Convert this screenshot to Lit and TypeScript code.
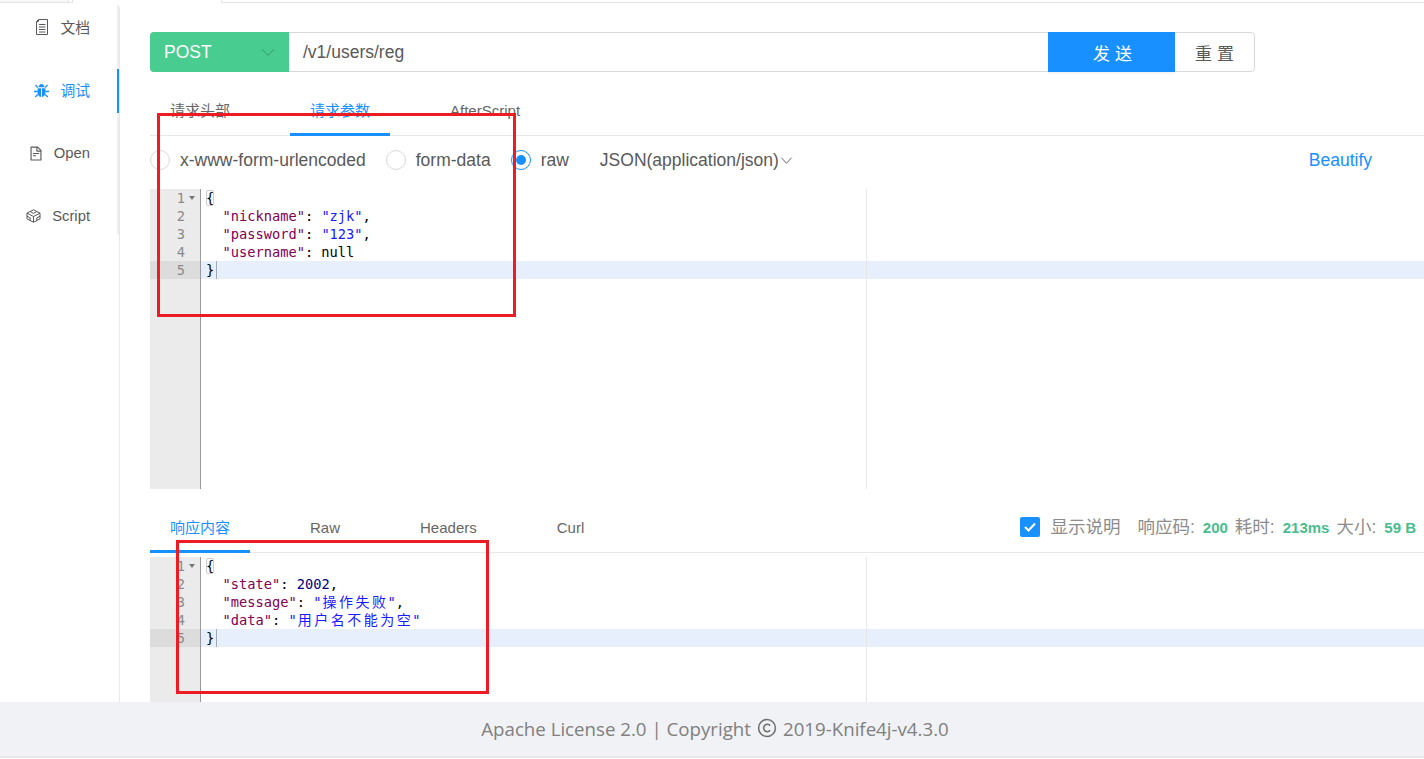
import { LitElement, html, css, svg } from "lit";
import { customElement } from "lit/decorators.js";

type Tok = [string, string];
const reqLines: Tok[][] = [
  [["br", "{"]],
  [["k", '  "nickname"'], ["p", ": "], ["s", '"zjk"'], ["p", ","]],
  [["k", '  "password"'], ["p", ": "], ["s", '"123"'], ["p", ","]],
  [["k", '  "username"'], ["p", ": null"]],
  [["p", "}"]],
];
const resLines: Tok[][] = [
  [["br", "{"]],
  [["k", '  "state"'], ["p", ": "], ["n", "2002"], ["p", ","]],
  [["k", '  "message"'], ["p", ": "], ["s", '"'], ["c", "操作失败"], ["s", '"'], ["p", ","]],
  [["k", '  "data"'], ["p", ": "], ["s", '"'], ["c", "用户名不能为空"], ["s", '"']],
  [["p", "}"]],
];

const chevron = svg`<path d="M1.5 3.5 L7 9.5 L12.5 3.5" fill="none" stroke="currentColor" stroke-width="1"/>`;

@customElement("app-root")
export class AppRoot extends LitElement {
  static styles = css`
    :host { display: block; width: 1424px; height: 759px; position: relative; overflow: hidden; background: #fff;
      font-family: "Liberation Sans", "Noto Sans CJK SC", sans-serif; color: #595959; }
    .top { height: 7px; display: flex; align-items: flex-start; }
    .strip { height: 3px; box-sizing: border-box; }
    .strip.a { width: 69px; background: #f7f7f7; border-bottom: 1px solid #e4e4e4; border-right: 1px solid #e4e4e4; }
    .strip.notch { width: 4px; border-bottom: 1px solid #e4e4e4; border-right: 1px solid #e4e4e4; }
    .strip.gap { width: 147px; }
    .strip.c { flex: 1; border-left: 1px solid #e4e4e4; border-bottom: 1px solid #e4e4e4; }
    .body { display: flex; height: 695px; }
    .side { width: 120px; flex: none; box-sizing: border-box; border-right: 1px solid #e8e8e8; }
    .nav { height: 230px; box-sizing: border-box; border-right: 2px solid #efefef; }
    .item { height: 44px; margin-top: -2px; margin-bottom: 21px; display: flex; align-items: center; justify-content: flex-end;
      gap: 11px; padding-right: 27px; font-size: 14.8px; color: #595959; position: relative; }
    .item.on { color: #1890ff; }
    .item.on::after { content: ""; position: absolute; right: -2px; top: 1px; width: 2px; height: 44px; background: #1890ff; }
    .item svg { display: block; flex: none; }
    .cn { margin-bottom: 2px; }
    .main { flex: 1; min-width: 0; padding: 25px 0 0 30px; overflow: hidden; }
    .bar { width: 1105px; height: 40px; display: flex; box-sizing: border-box; border: 1px solid #d9d9d9; border-radius: 4px; margin-bottom: 13px; font-size: 17.5px; }
    .method { width: 139px; margin: -1px 0 -1px -1px; flex: none; background: #49cc90; color: #fff; border-radius: 4px 0 0 4px; display: flex; align-items: center; justify-content: space-between; padding: 0 14px; box-sizing: border-box; }
    .method svg { color: #2f9c6c; width: 14px; height: 13px; }
    .url { flex: 1; padding-left: 14px; display: flex; align-items: center; color: #595959; }
    .send { width: 127px; flex: none; margin: -1px 0; background: #1890ff; color: #fff; display: flex; align-items: center; justify-content: center; box-sizing: border-box; padding-left: 7px; font-size: 17px; letter-spacing: 5px; box-shadow: 0 2px 0 rgba(0,0,0,.035); }
    .reset { width: 79px; flex: none; display: flex; align-items: center; justify-content: center; box-sizing: border-box; padding-left: 5px; letter-spacing: 5px; font-size: 17px; }
    .tabs { height: 51px; display: flex; box-sizing: border-box; border-bottom: 1px solid #e8e8e8; font-size: 15px; align-items: stretch; }
    .tab { padding: 0 20px; margin-right: 40px; display: flex; align-items: center; position: relative; color: #666; }
    .tab.on { color: #1890ff; }
    .tab.on::after { content: ""; position: absolute; left: 0; right: 0; bottom: -1px; height: 3px; background: #1890ff; }
    .opts { height: 20px; margin: 14px 0 19px; display: flex; align-items: center; font-size: 17.5px; color: #595959; }
    .radio { width: 20px; height: 20px; box-sizing: border-box; border: 1px solid #d9d9d9; border-radius: 50%; margin-right: 10px; flex: none; position: relative; }
    .radio.on { border-color: #1890ff; }
    .radio.on::after { content: ""; position: absolute; inset: 4px; border-radius: 50%; background: #1890ff; }
    .lbl { margin-right: 20px; }
    .lbl.raw { margin-right: 31px; }
    .opts svg { width: 13px; height: 13px; margin-left: 1px; color: #595959; }
    .beautify { margin-left: 516px; color: #1890ff; }
    .editor { display: flex; position: relative; font-family: "DejaVu Sans Mono", "Noto Sans CJK SC", monospace; font-size: 13.7px; line-height: 18px; color: #000; overflow: hidden; }
    .editor.req { height: 300px; margin-bottom: 13px; }
    .editor.res { height: 145px; margin-top: 4px; }
    .gutter { width: 51px; flex: none; box-sizing: border-box; background: #ebebeb; border-right: 1px solid #999; color: #8a8a8a; }
    .gl { height: 18px; text-align: right; padding-right: 15px; position: relative; }
    .gl.act { background: #dcdcdc; }
    .gl.fold::after { content: ""; position: absolute; right: 5px; top: 7px; border: 3.5px solid transparent; border-top: 4px solid #777; border-bottom: 0; }
    .code { flex: 1; position: relative; }
    .code::after { content: ""; position: absolute; left: 665px; top: 0; bottom: 0; width: 1px; background: #e8e8e8; }
    .ln { height: 18px; padding-left: 5px; white-space: pre; }
    .ln.act { background: #e6effb; }
    .k { color: #7f0055; }
    .s { color: #1a1aff; }
    .n { color: #000080; }
    .c { color: #1a1aff; font-size: 14px; letter-spacing: 2.5px; margin-left: 1px; margin-right: -1px; }
    .br { outline: 1px solid #ccc; outline-offset: -1px; border-radius: 2px; }
    .caret { display: inline-block; width: 1px; height: 18px; background: #a0a8b0; vertical-align: top; margin-left: 2px; }
    .stats { margin-left: auto; padding-right: 8px; display: flex; align-items: center; font-size: 17.5px; color: #8c8c8c; }
    .stats .cn { margin-bottom: 3px; }
    .check { width: 20px; height: 20px; background: #1890ff; border-radius: 2px; display: flex; align-items: center; justify-content: center; margin-right: 10px; margin-bottom: 1px; }
    .desc { margin-right: 17px; }
    .stat { font-weight: 700; font-size: 15px; color: #49bd8e; margin: 0 7px 0 8px; }
    .stat:last-child { margin-right: 0; }
    .foot { height: 54px; background: #f0f2f5; display: flex; align-items: center; justify-content: center; gap: 6px; font-family: "Open Sans", sans-serif; font-size: 18.7px; color: #808080; padding: 0 0 2px 6px; box-sizing: border-box; }
    .footline { height: 2px; background: #e6e6e6; }
    .foot svg { display: block; }
    .mark { position: absolute; box-sizing: border-box; border: 3px solid #ed1c24; pointer-events: none; }
    .mark.one { left: 157px; top: 113px; width: 359px; height: 204px; }
    .mark.two { left: 176px; top: 540px; width: 313px; height: 154px; }
  `;

  private editor(cls: string, lines: Tok[][]) {
    return html`<div class="editor ${cls}">
      <div class="gutter">
        ${lines.map((_, i) => html`<div class="gl ${i === 0 ? "fold" : ""} ${i === lines.length - 1 ? "act" : ""}">${i + 1}</div>`)}
      </div>
      <div class="code">
        ${lines.map((l, i) => html`<div class="ln ${i === lines.length - 1 ? "act" : ""}">${l.map(([c, t]) => html`<span class=${c}>${t}</span>`)}${i === lines.length - 1 ? html`<span class="caret"></span>` : ""}</div>`)}
      </div>
    </div>`;
  }

  render() {
    return html`
      <div class="top"><div class="strip a"></div><div class="strip notch"></div><div class="strip gap"></div><div class="strip c"></div></div>
      <div class="body">
        <div class="side">
          <div class="nav">
            <div class="item">
              <svg width="14" height="16" viewBox="0 0 14 16" fill="none" stroke="#595959" stroke-width="1"><path d="M3.500 .5h9v15H1.500V2.500z"/><path d="M3.500 .5V2.500H1.500M4 5.500h6.500M4 8h6.500M4 10.500h6.500M4 13h6.500"/></svg>
              <span class="cn">文档</span>
            </div>
            <div class="item on">
              <svg width="15" height="15" viewBox="0 0 15 15" fill="#1890ff"><path d="M4.500 4.200C4.700 2.300 5.900 1 7.500 1s2.800 1.300 3 3.200z"/><path d="M3.800 5.200H7v8.800c-2.200-.2-3.600-2.500-3.600-5.300 0-1.300.1-2.500.4-3.500zM8 5.200h3.200c.3 1 .4 2.200.4 3.500 0 2.800-1.400 5.100-3.600 5.300z"/><path d="M1.500 2l2.300 2.700M13.500 2l-2.300 2.700M0 8.500h3.500M11.500 8.500H15M1.200 14l2.600-2.500M13.800 14l-2.600-2.500" stroke="#1890ff" stroke-width="1.300" fill="none"/></svg>
              <span class="cn">调试</span>
            </div>
            <div class="item">
              <svg width="14" height="15" viewBox="64 64 896 896" fill="#595959"><path d="M854.600 288.600L639.400 73.400c-6-6-14.100-9.400-22.600-9.400H192c-17.700 0-32 14.300-32 32v832c0 17.700 14.300 32 32 32h640c17.700 0 32-14.300 32-32V311.300c0-8.500-3.400-16.700-9.400-22.700zM790.200 326H602V137.800L790.200 326zm1.800 562H232V136h302v216a42 42 0 0 0 42 42h216v494zM504 618H320c-4.400 0-8 3.600-8 8v48c0 4.400 3.600 8 8 8h184c4.400 0 8-3.600 8-8v-48c0-4.400-3.600-8-8-8zM312 490v48c0 4.400 3.600 8 8 8h384c4.400 0 8-3.600 8-8v-48c0-4.400-3.600-8-8-8H320c-4.400 0-8 3.600-8 8z"/></svg>
              <span>Open</span>
            </div>
            <div class="item">
              <svg width="15" height="14" viewBox="0 0 15 14" fill="none" stroke="#595959" stroke-width="1"><path d="M7.500 .8l6.500 3.300v5.800l-6.500 3.300L1 9.900V4.100z"/><path d="M1 4.100l6.500 3.400L14 4.100M7.500 7.500v5.700M4.200 2.500l3.300 1.900 3.300-1.900M4.200 11.500V8.900L1 7.200M10.800 11.500V8.900L14 7.200"/></svg>
              <span>Script</span>
            </div>
          </div>
        </div>
        <div class="main">
          <div class="bar">
            <div class="method"><span>POST</span><svg viewBox="0 0 14 13">${chevron}</svg></div>
            <div class="url">/v1/users/reg</div>
            <div class="send">发送</div>
            <div class="reset">重置</div>
          </div>
          <div class="tabs">
            <div class="tab"><span class="cn">请求头部</span></div>
            <div class="tab on"><span class="cn">请求参数</span></div>
            <div class="tab">AfterScript</div>
          </div>
          <div class="opts">
            <span class="radio"></span><span class="lbl">x-www-form-urlencoded</span>
            <span class="radio"></span><span class="lbl">form-data</span>
            <span class="radio on"></span><span class="lbl raw">raw</span>
            <span>JSON(application/json)</span><svg viewBox="0 0 14 13">${chevron}</svg>
            <span class="beautify">Beautify</span>
          </div>
          ${this.editor("req", reqLines)}
          <div class="tabs">
            <div class="tab on"><span class="cn">响应内容</span></div>
            <div class="tab">Raw</div>
            <div class="tab">Headers</div>
            <div class="tab">Curl</div>
            <div class="stats">
              <span class="check"><svg width="14" height="12" viewBox="0 0 14 12" fill="none" stroke="#fff" stroke-width="2"><path d="M2 6l3.500 3.500L12 2.500"/></svg></span>
              <span class="desc cn">显示说明</span>
              <span class="cn">响应码:</span><span class="stat">200</span>
              <span class="cn">耗时:</span><span class="stat">213ms</span>
              <span class="cn">大小:</span><span class="stat">59 B</span>
            </div>
          </div>
          ${this.editor("res", resLines)}
        </div>
      </div>
      <div class="foot">
        <span>Apache License 2.0 | Copyright</span>
        <svg width="20" height="20" viewBox="0 0 19 19" fill="none" stroke="#707070" stroke-width="1.500"><circle cx="9.500" cy="9.500" r="8"/><path d="M12.500 7.300a3.500 3.500 0 1 0 0 4.400"/></svg>
        <span>2019-Knife4j-v4.3.0</span>
      </div>
      <div class="footline"></div>
      <div class="mark one"></div>
      <div class="mark two"></div>
    `;
  }
}
